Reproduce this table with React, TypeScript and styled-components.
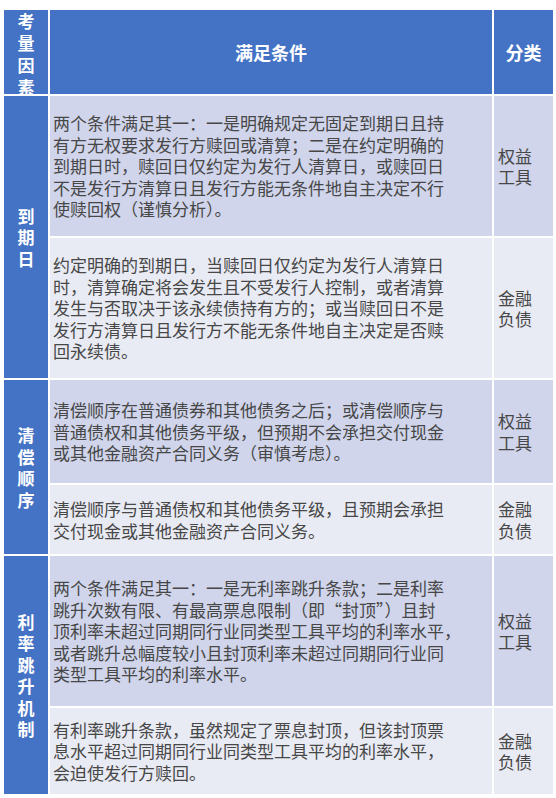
import React from 'react';
import styled, { createGlobalStyle } from 'styled-components';

const GlobalStyle = createGlobalStyle`
  html, body {
    margin: 0;
    padding: 0;
    background: #ffffff;
  }

  body {
    font-family: "Noto Sans CJK SC", "Liberation Sans", sans-serif;
  }
`;

type Tone = 'dark' | 'light';

interface Row {
  lines: string[];
  kind: string[];
  tone: Tone;
}

interface Group {
  factor: string;
  rows: Row[];
}

const groups: Group[] = [
  {
    factor: '到期日',
    rows: [
      {
        tone: 'dark',
        kind: ['权益', '工具'],
        lines: [
          '两个条件满足其一：一是明确规定无固定到期日且持',
          '有方无权要求发行方赎回或清算；二是在约定明确的',
          '到期日时，赎回日仅约定为发行人清算日，或赎回日',
          '不是发行方清算日且发行方能无条件地自主决定不行',
          '使赎回权（谨慎分析）。',
        ],
      },
      {
        tone: 'light',
        kind: ['金融', '负债'],
        lines: [
          '约定明确的到期日，当赎回日仅约定为发行人清算日',
          '时，清算确定将会发生且不受发行人控制，或者清算',
          '发生与否取决于该永续债持有方的；或当赎回日不是',
          '发行方清算日且发行方不能无条件地自主决定是否赎',
          '回永续债。',
        ],
      },
    ],
  },
  {
    factor: '清偿顺序',
    rows: [
      {
        tone: 'dark',
        kind: ['权益', '工具'],
        lines: [
          '清偿顺序在普通债券和其他债务之后；或清偿顺序与',
          '普通债权和其他债务平级，但预期不会承担交付现金',
          '或其他金融资产合同义务（审慎考虑）。',
        ],
      },
      {
        tone: 'light',
        kind: ['金融', '负债'],
        lines: [
          '清偿顺序与普通债权和其他债务平级，且预期会承担',
          '交付现金或其他金融资产合同义务。',
        ],
      },
    ],
  },
  {
    factor: '利率跳升机制',
    rows: [
      {
        tone: 'dark',
        kind: ['权益', '工具'],
        lines: [
          '两个条件满足其一：一是无利率跳升条款；二是利率',
          '跳升次数有限、有最高票息限制（即“封顶”）且封',
          '顶利率未超过同期同行业同类型工具平均的利率水平，',
          '或者跳升总幅度较小且封顶利率未超过同期同行业同',
          '类型工具平均的利率水平。',
        ],
      },
      {
        tone: 'light',
        kind: ['金融', '负债'],
        lines: [
          '有利率跳升条款，虽然规定了票息封顶，但该封顶票',
          '息水平超过同期同行业同类型工具平均的利率水平，',
          '会迫使发行方赎回。',
        ],
      },
    ],
  },
];

// body row heights, in order, taken from the reference
const rowHeights = [140, 140, 103, 69, 150, 86];

const Table = styled.div`
  display: grid;
  grid-template-columns: 44px 442px 59px;
  grid-template-rows: 84px ${rowHeights.map((h) => `${h}px`).join(' ')};
  gap: 2px;
  width: 549px;
  margin: 10px 0 0 4px;
  background: #ffffff;
`;

const HeadCell = styled.div<{ $stack?: boolean }>`
  background: #4472c4;
  color: #ffffff;
  font-weight: 700;
  font-size: ${(p) => (p.$stack ? '17px' : '18px')};
  line-height: 22px;
  display: flex;
  justify-content: center;
  align-items: ${(p) => (p.$stack ? 'flex-start' : 'center')};
  overflow: hidden;
`;

const Stacked = styled.span`
  display: block;
  width: 1em;
  text-align: center;
`;

const FactorCell = styled.div<{ $start: number; $span: number }>`
  grid-column: 1;
  grid-row: ${(p) => `${p.$start} / span ${p.$span}`};
  background: #4472c4;
  color: #ffffff;
  font-weight: 700;
  font-size: 17px;
  line-height: 21.5px;
  display: flex;
  align-items: center;
  justify-content: center;
`;

const BodyCell = styled.div<{ $tone: Tone }>`
  background: ${(p) => (p.$tone === 'dark' ? '#d0d5eb' : '#e9ebf4')};
  color: #474747;
  font-size: 17px;
  line-height: 21.5px;
  display: flex;
  align-items: center;
  white-space: nowrap;
`;

const ConditionCell = styled(BodyCell)`
  padding-left: 3px;
`;

const KindCell = styled(BodyCell)`
  padding-left: 4px;
`;

const Lines = ({ lines }: { lines: string[] }) => (
  <div>
    {lines.map((line, i) => (
      <React.Fragment key={i}>
        {line}
        {i < lines.length - 1 && <br />}
      </React.Fragment>
    ))}
  </div>
);

const App = () => {
  let nextRow = 2;

  return (
    <>
      <GlobalStyle />
      <Table lang="zh-CN">
        <HeadCell $stack>
          <Stacked>考量因素</Stacked>
        </HeadCell>
        <HeadCell>满足条件</HeadCell>
        <HeadCell>分类</HeadCell>

        {groups.map((group) => {
          const start = nextRow;
          nextRow += group.rows.length;
          return (
            <React.Fragment key={group.factor}>
              <FactorCell $start={start} $span={group.rows.length}>
                <Stacked>{group.factor}</Stacked>
              </FactorCell>
              {group.rows.map((row, i) => (
                <React.Fragment key={i}>
                  <ConditionCell $tone={row.tone} style={{ gridRow: start + i }}>
                    <Lines lines={row.lines} />
                  </ConditionCell>
                  <KindCell $tone={row.tone} style={{ gridRow: start + i }}>
                    <Lines lines={row.kind} />
                  </KindCell>
                </React.Fragment>
              ))}
            </React.Fragment>
          );
        })}
      </Table>
    </>
  );
};

export default App;
